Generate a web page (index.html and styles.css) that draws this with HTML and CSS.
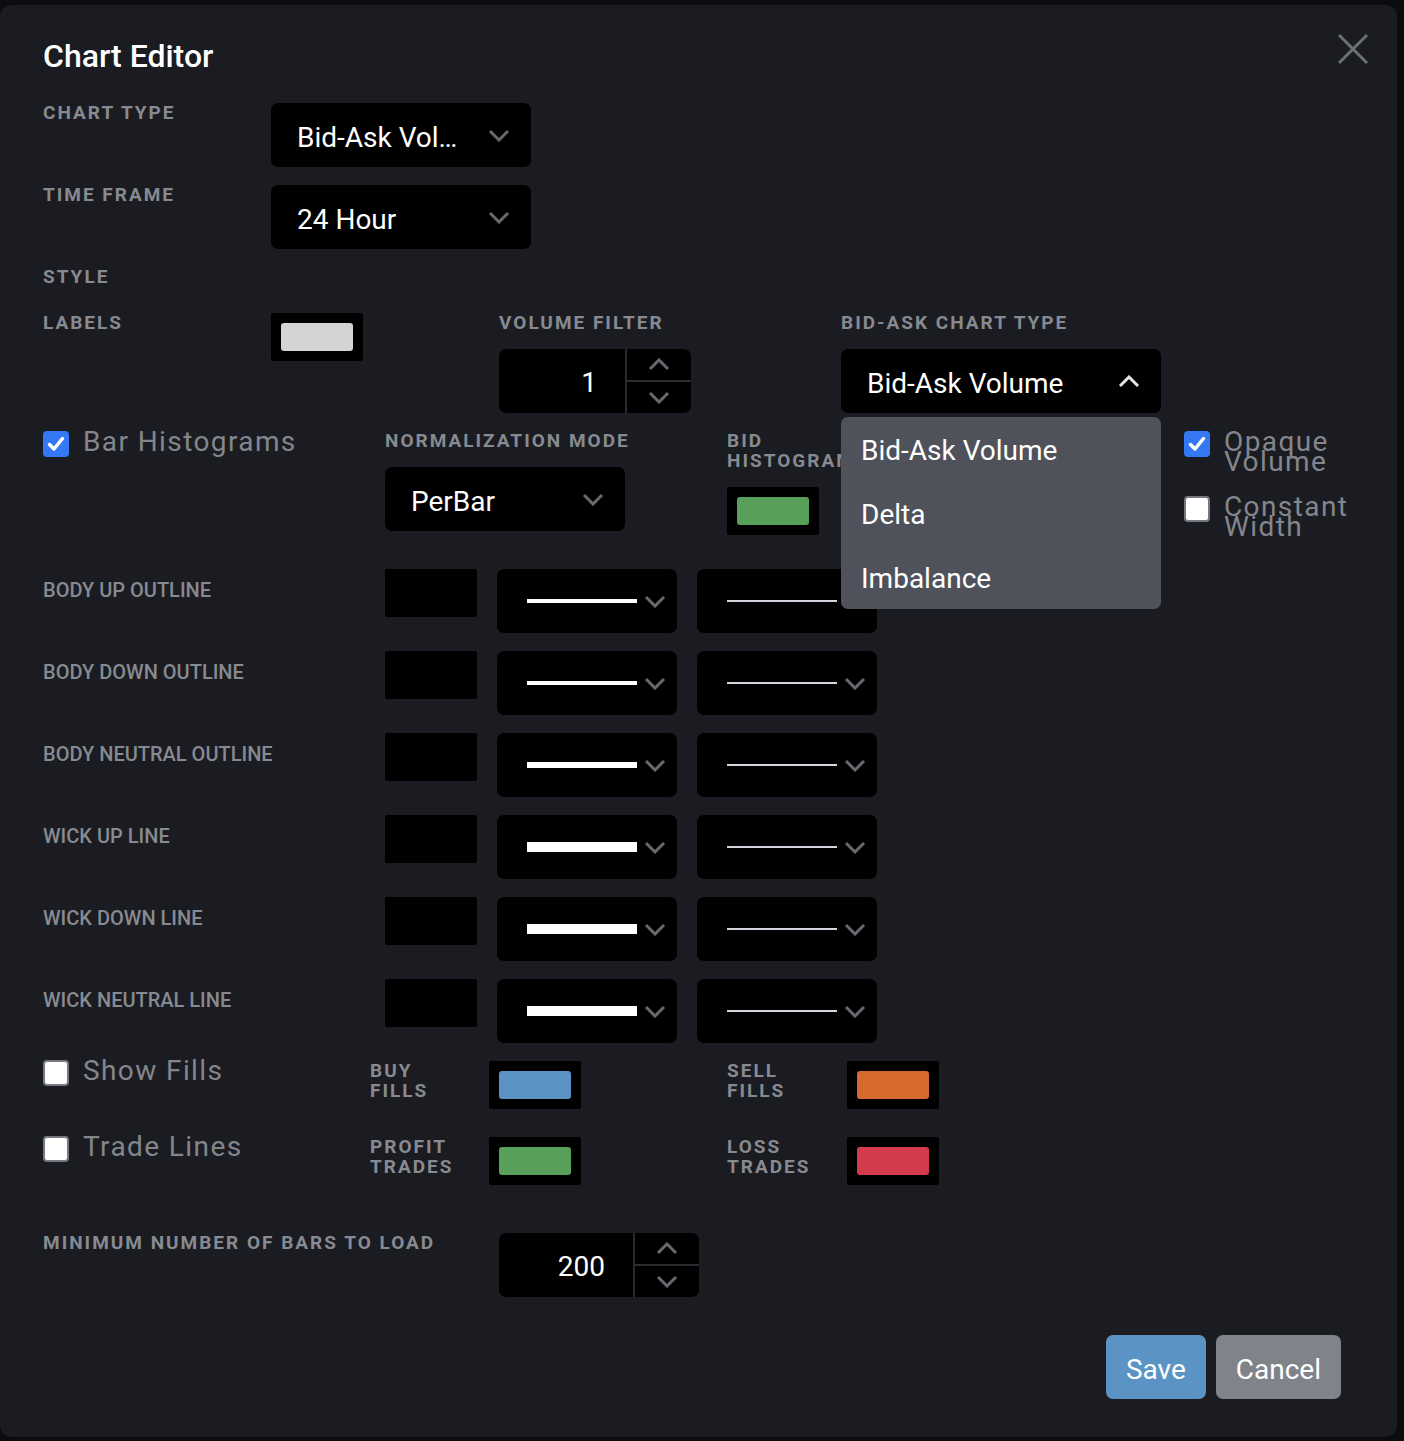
FILE: index.html
```html
<!DOCTYPE html>
<html lang="en">
<head>
  <meta charset="UTF-8" />
  <meta name="viewport" content="width=device-width, initial-scale=1" />
  <title>Chart Editor</title>
  <link rel="stylesheet" href="styles.css">
</head>
<body>
  <div class="modal">
    <button class="close-btn" aria-label="Close">
      <svg width="32" height="32" viewBox="0 0 32 32"><path d="M2 2L30 30M30 2L2 30" stroke="#6c6f74" stroke-width="3" fill="none"/></svg>
    </button>

    <h1 class="modal-title">Chart Editor</h1>

    <div class="form-row basic-row">
      <div class="field-label label-col">Chart Type</div>
      <div class="select select-md">
        <span class="select-value">Bid-Ask Vol…</span>
        <svg class="chevron" width="22" height="13" viewBox="0 0 22 13"><path d="M2 2L11 11L20 2"/></svg>
      </div>
    </div>

    <div class="form-row basic-row">
      <div class="field-label label-col">Time Frame</div>
      <div class="select select-md">
        <span class="select-value">24 Hour</span>
        <svg class="chevron" width="22" height="13" viewBox="0 0 22 13"><path d="M2 2L11 11L20 2"/></svg>
      </div>
    </div>

    <div class="field-label section-title">Style</div>

    <!-- labels / volume filter / bid-ask type -->
    <div class="form-row style-row">
      <div class="field-label label-col">Labels</div>
      <div class="swatch-box"><span class="swatch swatch-grey"></span></div>

      <div class="field-group volume-group">
        <div class="field-label">Volume Filter</div>
        <div class="number-input">
          <span class="number-value">1</span>
          <div class="spinner">
            <span class="spin-btn"><svg width="22" height="13" viewBox="0 0 22 13"><path d="M2 11L11 2L20 11"/></svg></span>
            <span class="spin-btn"><svg width="22" height="13" viewBox="0 0 22 13"><path d="M2 2L11 11L20 2"/></svg></span>
          </div>
        </div>
      </div>

      <div class="field-group bidask-group">
        <div class="field-label">Bid-Ask Chart Type</div>
        <div class="select select-lg">
          <span class="select-value">Bid-Ask Volume</span>
          <svg class="chevron chevron-open" width="22" height="13" viewBox="0 0 22 13"><path d="M2 11L11 2L20 11"/></svg>
        </div>
        <ul class="dropdown-menu">
          <li>Bid-Ask Volume</li>
          <li>Delta</li>
          <li>Imbalance</li>
        </ul>
      </div>
    </div>

    <div class="form-row hist-row">
      <label class="check-item hist-check">
        <span class="checkbox checked"><svg width="18" height="16" viewBox="0 0 18 16"><path d="M2.5 8.5L7 13L15.5 2.5"/></svg></span>
        <span class="check-text">Bar Histograms</span>
      </label>

      <div class="field-group norm-group">
        <div class="field-label">Normalization Mode</div>
        <div class="select select-sm">
          <span class="select-value">PerBar</span>
          <svg class="chevron" width="22" height="13" viewBox="0 0 22 13"><path d="M2 2L11 11L20 2"/></svg>
        </div>
      </div>

      <div class="field-group histo-group">
        <div class="field-label">Bid Histogram</div>
        <div class="swatch-box"><span class="swatch swatch-green"></span></div>
      </div>

      <div class="check-list">
        <label class="check-item">
          <span class="checkbox checked"><svg width="18" height="16" viewBox="0 0 18 16"><path d="M2.5 8.5L7 13L15.5 2.5"/></svg></span>
          <span class="check-text">Opaque Volume</span>
        </label>
        <label class="check-item">
          <span class="checkbox"></span>
          <span class="check-text">Constant Width</span>
        </label>
      </div>
    </div>

    <!-- line style rows -->
    <div class="line-rows">
      <div class="line-row">
        <div class="row-label">Body Up Outline</div>
        <div class="color-box"></div>
        <div class="select select-line">
          <span class="line-sample line-4"></span>
          <svg class="chevron" width="22" height="13" viewBox="0 0 22 13"><path d="M2 2L11 11L20 2"/></svg>
        </div>
        <div class="select select-line">
          <span class="line-sample line-thin"></span>
          <svg class="chevron" width="22" height="13" viewBox="0 0 22 13"><path d="M2 2L11 11L20 2"/></svg>
        </div>
      </div>
      <div class="line-row">
        <div class="row-label">Body Down Outline</div>
        <div class="color-box"></div>
        <div class="select select-line">
          <span class="line-sample line-4"></span>
          <svg class="chevron" width="22" height="13" viewBox="0 0 22 13"><path d="M2 2L11 11L20 2"/></svg>
        </div>
        <div class="select select-line">
          <span class="line-sample line-thin"></span>
          <svg class="chevron" width="22" height="13" viewBox="0 0 22 13"><path d="M2 2L11 11L20 2"/></svg>
        </div>
      </div>
      <div class="line-row">
        <div class="row-label">Body Neutral Outline</div>
        <div class="color-box"></div>
        <div class="select select-line">
          <span class="line-sample line-6"></span>
          <svg class="chevron" width="22" height="13" viewBox="0 0 22 13"><path d="M2 2L11 11L20 2"/></svg>
        </div>
        <div class="select select-line">
          <span class="line-sample line-thin"></span>
          <svg class="chevron" width="22" height="13" viewBox="0 0 22 13"><path d="M2 2L11 11L20 2"/></svg>
        </div>
      </div>
      <div class="line-row">
        <div class="row-label">Wick Up Line</div>
        <div class="color-box"></div>
        <div class="select select-line">
          <span class="line-sample line-10"></span>
          <svg class="chevron" width="22" height="13" viewBox="0 0 22 13"><path d="M2 2L11 11L20 2"/></svg>
        </div>
        <div class="select select-line">
          <span class="line-sample line-thin"></span>
          <svg class="chevron" width="22" height="13" viewBox="0 0 22 13"><path d="M2 2L11 11L20 2"/></svg>
        </div>
      </div>
      <div class="line-row">
        <div class="row-label">Wick Down Line</div>
        <div class="color-box"></div>
        <div class="select select-line">
          <span class="line-sample line-10"></span>
          <svg class="chevron" width="22" height="13" viewBox="0 0 22 13"><path d="M2 2L11 11L20 2"/></svg>
        </div>
        <div class="select select-line">
          <span class="line-sample line-thin"></span>
          <svg class="chevron" width="22" height="13" viewBox="0 0 22 13"><path d="M2 2L11 11L20 2"/></svg>
        </div>
      </div>
      <div class="line-row">
        <div class="row-label">Wick Neutral Line</div>
        <div class="color-box"></div>
        <div class="select select-line">
          <span class="line-sample line-10"></span>
          <svg class="chevron" width="22" height="13" viewBox="0 0 22 13"><path d="M2 2L11 11L20 2"/></svg>
        </div>
        <div class="select select-line">
          <span class="line-sample line-thin"></span>
          <svg class="chevron" width="22" height="13" viewBox="0 0 22 13"><path d="M2 2L11 11L20 2"/></svg>
        </div>
      </div>
    </div>

    <!-- fills / trades -->
    <div class="form-row pair-row fills-row">
      <label class="check-item pair-check">
        <span class="checkbox"></span>
        <span class="check-text">Show Fills</span>
      </label>
      <div class="field-label pair-label">Buy Fills</div>
      <div class="swatch-box"><span class="swatch swatch-blue"></span></div>
      <div class="field-label pair-label pair-second">Sell Fills</div>
      <div class="swatch-box"><span class="swatch swatch-orange"></span></div>
    </div>

    <div class="form-row pair-row">
      <label class="check-item pair-check">
        <span class="checkbox"></span>
        <span class="check-text">Trade Lines</span>
      </label>
      <div class="field-label pair-label">Profit Trades</div>
      <div class="swatch-box"><span class="swatch swatch-green"></span></div>
      <div class="field-label pair-label pair-second">Loss Trades</div>
      <div class="swatch-box"><span class="swatch swatch-red"></span></div>
    </div>

    <div class="form-row bars-row">
      <div class="field-label bars-label">Minimum Number of Bars to Load</div>
      <div class="number-input number-wide">
        <span class="number-value">200</span>
        <div class="spinner">
          <span class="spin-btn"><svg width="22" height="13" viewBox="0 0 22 13"><path d="M2 11L11 2L20 11"/></svg></span>
          <span class="spin-btn"><svg width="22" height="13" viewBox="0 0 22 13"><path d="M2 2L11 11L20 2"/></svg></span>
        </div>
      </div>
    </div>

    <div class="modal-footer">
      <button class="btn btn-save">Save</button>
      <button class="btn btn-cancel">Cancel</button>
    </div>
  </div>
</body>
</html>
```

FILE: styles.css
```css
/* Chart editor modal - dark theme */
* {
  box-sizing: border-box;
}

body {
  margin: 0;
  background: #0b0c0e;
  font-family: Roboto, "Noto Sans", sans-serif;
  color: #fff;
}

.modal {
  position: relative;
  width: 1397px;
  margin-top: 5px;
  background: #1b1c21;
  border-radius: 12px;
  padding: 31px 56px 38px 43px;
}

.close-btn {
  position: absolute;
  top: 28px;
  right: 28px;
  width: 32px;
  height: 32px;
  padding: 0;
  border: none;
  background: none;
  cursor: pointer;
}

.modal-title {
  margin: 0 0 27px;
  font-size: 32px;
  font-weight: 500;
  line-height: 40px;
  color: #fff;
}

/* Labels */
.field-label {
  padding-top: 2px;
  font-size: 19px;
  font-weight: 700;
  line-height: 20px;
  letter-spacing: 2px;
  text-transform: uppercase;
  color: #878a91;
}

.row-label {
  width: 342px;
  flex: none;
  padding-top: 11px;
  font-size: 20px;
  font-weight: 500;
  line-height: 20px;
  text-transform: uppercase;
  color: #878a91;
}

.form-row {
  display: flex;
  align-items: flex-start;
}

.label-col {
  width: 228px;
  flex: none;
}

.basic-row {
  margin-bottom: 18px;
}

.basic-row .label-col {
  margin-top: -2px;
}

.section-title {
  margin: -2px 0 24px;
}

.field-group {
  position: relative;
  flex: none;
  display: flex;
  flex-direction: column;
  gap: 16px;
}

.field-group .field-label {
  white-space: nowrap;
}

/* Selects */
.select {
  display: flex;
  align-items: center;
  flex: none;
  height: 64px;
  background: #000;
  border-radius: 7px;
  font-size: 28px;
  color: #fff;
}

.select-md,
.select-lg,
.select-sm {
  gap: 18px;
  padding: 4px 21px 0 26px;
}

.select-md {
  width: 260px;
}

.select-lg {
  width: 320px;
}

.select-sm {
  width: 240px;
}

.select-value {
  flex: 1;
  min-width: 0;
  white-space: nowrap;
  overflow: hidden;
  text-overflow: ellipsis;
}

.chevron {
  flex: none;
}

.select-md .chevron,
.select-lg .chevron,
.select-sm .chevron {
  margin-top: -4px;
}

.chevron path,
.spin-btn path {
  fill: none;
  stroke: #66696e;
  stroke-width: 3;
}

.chevron-open path {
  stroke: #e2e3e6;
}

.select-line {
  width: 180px;
  gap: 7px;
  padding: 0 11px 0 30px;
}

.line-sample {
  width: 110px;
  flex: none;
  background: #fff;
}

.line-4 { height: 4px; }
.line-6 { height: 6px; }
.line-10 { height: 10px; }

.line-thin {
  height: 2px;
  background: #d2d5de;
}

/* Dropdown */
.dropdown-menu {
  position: absolute;
  top: 106px;
  left: 0;
  width: 320px;
  margin: 0;
  padding: 0;
  list-style: none;
  background: #4f525a;
  border-radius: 7px;
  z-index: 5;
}

.dropdown-menu li {
  height: 64px;
  padding: 4px 0 0 20px;
  line-height: 60px;
  font-size: 28px;
  color: #fff;
}

/* Color swatches */
.swatch-box {
  flex: none;
  width: 92px;
  height: 48px;
  padding: 10px;
  background: #000;
  border-radius: 2px;
}

.swatch {
  display: block;
  width: 100%;
  height: 100%;
  border-radius: 3px;
}

.swatch-grey { background: #d4d4d4; }
.swatch-green { background: #58a05a; }
.swatch-blue { background: #5b94c4; }
.swatch-orange { background: #d6692e; }
.swatch-red { background: #d43c4b; }

.color-box {
  flex: none;
  width: 92px;
  height: 48px;
  background: #000;
  border-radius: 2px;
}

/* Number input */
.number-input {
  display: flex;
  width: 192px;
  height: 64px;
  background: #000;
  border-radius: 7px;
  overflow: hidden;
}

.number-wide {
  width: 200px;
}

.number-value {
  flex: 1;
  padding: 4px 28px 0 0;
  text-align: right;
  font-size: 28px;
  line-height: 60px;
  color: #fff;
}

.spinner {
  width: 66px;
  flex: none;
  display: flex;
  flex-direction: column;
  border-left: 2px solid #2a2b30;
}

.spin-btn {
  flex: 1;
  display: flex;
  align-items: center;
  justify-content: center;
}

.spin-btn + .spin-btn {
  border-top: 2px solid #2a2b30;
}

/* Checkboxes */
.check-item {
  display: flex;
  align-items: flex-start;
  gap: 14px;
}

.checkbox {
  flex: none;
  width: 26px;
  height: 26px;
  border-radius: 4px;
  background: #fff;
  border: 2px solid #76797f;
}

.checkbox.checked {
  display: flex;
  align-items: center;
  justify-content: center;
  background: #3478f6;
  border-color: #3478f6;
}

.checkbox path {
  fill: none;
  stroke: #fff;
  stroke-width: 3.5;
  stroke-linecap: round;
  stroke-linejoin: round;
}

.check-text {
  font-size: 28px;
  line-height: 20px;
  letter-spacing: 1.4px;
  color: #83868d;
  padding-top: 1px;
}

/* Style row */
.style-row {
  margin: 0 0 16px;
}

.style-row .swatch-box {
  margin-top: 2px;
}

.volume-group {
  width: 192px;
  margin-left: 136px;
}

.bidask-group {
  width: 320px;
  margin-left: 150px;
}

/* Histogram row */
.hist-row {
  margin-bottom: 32px;
}

.hist-check {
  width: 342px;
  flex: none;
  margin-top: 2px;
}

.norm-group {
  width: 240px;
  margin-right: 102px;
}

.histo-group {
  width: 92px;
}

.histo-group .field-label {
  width: 92px;
  white-space: normal;
}

.check-list {
  width: 157px;
  margin-left: auto;
  margin-top: 2px;
  display: flex;
  flex-direction: column;
  gap: 24px;
}

/* Line style rows */
.line-rows {
  display: flex;
  flex-direction: column;
  gap: 18px;
  margin-bottom: 16px;
}

.line-row {
  display: flex;
  align-items: flex-start;
  gap: 20px;
}

.line-row .row-label {
  margin-right: -20px;
}

/* Fills and trades */
.pair-row {
  height: 50px;
}

.fills-row {
  margin-bottom: 26px;
}

.pair-check {
  width: 327px;
  flex: none;
  margin-top: 1px;
}

.pair-label {
  width: 100px;
  margin-right: 19px;
  flex: none;
}

.pair-second {
  margin-left: 146px;
  margin-right: 20px;
}

.pair-row .swatch-box {
  margin-top: 2px;
}

/* Bars to load */
.bars-row {
  margin-top: 46px;
}

.bars-label {
  width: 456px;
  flex: none;
}

.bars-row .number-input {
  margin-top: 2px;
}

/* Footer */
.modal-footer {
  display: flex;
  justify-content: flex-end;
  gap: 10px;
  margin-top: 38px;
}

.btn {
  height: 64px;
  padding: 4px 20px 0;
  border: none;
  border-radius: 7px;
  font-family: inherit;
  font-size: 28px;
  color: #fff;
  cursor: pointer;
}

.btn-save {
  background: #5b94c4;
}

.btn-cancel {
  background: #80838a;
}
```
